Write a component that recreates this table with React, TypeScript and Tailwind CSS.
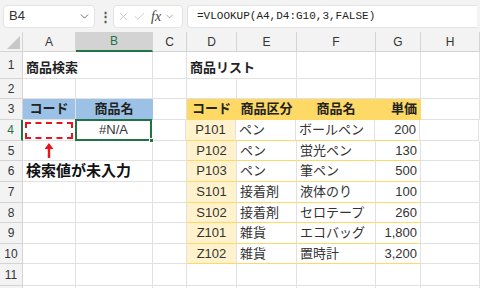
import { ChevronDown, X, Check } from "lucide-react";

const jp = { fontFamily: '"Liberation Sans", "Noto Sans CJK JP", sans-serif' };

const widths = ["w-[53px]", "w-[77px]", "w-[34px]", "w-[50px]", "w-[60px]", "w-[79px]", "w-[45px]", "w-[59px]"];
const letters = ["A", "B", "C", "D", "E", "F", "G", "H"];

const items = [
  ["P101", "ペン", "ボールペン", "200"],
  ["P102", "ペン", "蛍光ペン", "130"],
  ["P103", "ペン", "筆ペン", "500"],
  ["S101", "接着剤", "液体のり", "100"],
  ["S102", "接着剤", "セロテープ", "260"],
  ["Z101", "雑貨", "エコバッグ", "1,800"],
  ["Z102", "雑貨", "置時計", "3,200"],
];

const RowHead = ({ n, active }: { n?: number; active?: boolean }) => (
  <div
    className={`w-[23px] shrink-0 flex items-center justify-center bg-[#f3f3f3] border-r border-b border-[#d4d4d4] text-[12px] ${
      active ? "text-[#217346] border-r-[#217346] border-r-2" : "text-[#333]"
    }`}
  >
    {n}
  </div>
);

const Cell = ({ w, className = "", children }: { w: string; className?: string; children?: React.ReactNode }) => (
  <div className={`${w} shrink-0 flex items-center border-r border-b border-[#e1e1e1] ${className}`}>{children}</div>
);

const Blank = ({ from }: { from: number }) => (
  <>
    {widths.slice(from).map((w, i) => (
      <Cell key={i} w={w} />
    ))}
  </>
);

export default function App() {
  return (
    <div className="w-[480px] h-[288px] overflow-hidden bg-white text-[13px] text-[#333]" style={jp}>
      {/* formula bar */}
      <div className="h-[32px] bg-[#f3f3f3] flex items-center gap-[4px] px-[3px]">
        <div className="w-[92px] h-[23px] bg-white rounded-[4px] border border-[#e3e3e3] flex items-center justify-between pl-[5px] pr-[3px] text-[13px] text-[#333]">
          <span>B4</span>
          <ChevronDown size={13} strokeWidth={1.6} className="text-[#555]" />
        </div>
        <div className="w-[10px] text-center text-[#555] text-[13px] leading-none font-bold">⋮</div>
        <div className="w-[70px] h-[23px] bg-white rounded-[4px] border border-[#e3e3e3] flex items-center gap-[3px] px-[3px] text-[#bbb]">
          <X size={13} strokeWidth={1.3} />
          <Check size={13} strokeWidth={1.3} />
          <span className="text-[#444] italic text-[14px] ml-[2px]" style={{ fontFamily: '"Liberation Serif", serif' }}>
            fx
          </span>
          <ChevronDown size={11} strokeWidth={1.5} className="text-[#888]" />
        </div>
        <div
          className="flex-1 h-[23px] bg-white rounded-l-[4px] border border-r-0 border-[#e3e3e3] flex items-center pl-[9px] text-[11px] text-[#222]"
          style={{ fontFamily: '"Liberation Mono", monospace' }}
        >
          =VLOOKUP(A4,D4:G10,3,FALSE)
        </div>
      </div>

      {/* column headers */}
      <div className="flex h-[20px]">
        <div className="w-[23px] shrink-0 bg-[#f3f3f3] border-r border-b border-[#d4d4d4] relative">
          <div className="absolute right-[2px] bottom-[2px] w-0 h-0 border-l-[13px] border-l-transparent border-b-[13px] border-b-[#c8c8c8]" />
        </div>
        {widths.map((w, i) => (
          <div
            key={i}
            className={`${w} shrink-0 flex items-center justify-center text-[12px] border-r border-[#d4d4d4] ${
              i === 1
                ? "bg-[#d3d3d3] text-[#217346] border-b-2 border-b-[#217346]"
                : "bg-[#f3f3f3] text-[#333] border-b"
            }`}
          >
            {letters[i]}
          </div>
        ))}
      </div>

      {/* row 1 */}
      <div className="flex h-[27px]">
        <RowHead n={1} />
        <Cell w={widths[0]} className="border-r-0 font-bold pl-[3px] pt-[5px] text-[#222] whitespace-nowrap overflow-visible">
          商品検索
        </Cell>
        <Cell w={widths[1]} />
        <Cell w={widths[2]} />
        <Cell w={widths[3]} className="border-r-0 font-bold pl-[3px] pt-[5px] text-[#222] whitespace-nowrap overflow-visible">
          商品リスト
        </Cell>
        <Blank from={4} />
      </div>

      {/* row 2 */}
      <div className="flex h-[20px]">
        <RowHead n={2} />
        <Blank from={0} />
      </div>

      {/* row 3 */}
      <div className="flex h-[21px] text-[#222]">
        <RowHead n={3} />
        <Cell w={widths[0]} className="bg-[#9bc2e6] border-[#9bc2e6] justify-center font-bold">コード</Cell>
        <Cell w={widths[1]} className="bg-[#9bc2e6] border-r-[#9bc2e6] border-b-[#9bc2e6] justify-center font-bold">商品名</Cell>
        <Cell w={widths[2]} />
        <Cell w={widths[3]} className="bg-[#ffd966] border-[#ffd966] justify-center font-bold">コード</Cell>
        <Cell w={widths[4]} className="bg-[#ffd966] border-[#ffd966] justify-center font-bold">商品区分</Cell>
        <Cell w={widths[5]} className="bg-[#ffd966] border-[#ffd966] justify-center font-bold">商品名</Cell>
        <Cell w={widths[6]} className="bg-[#ffd966] border-[#ffd966] justify-end pr-[3px] font-bold">単価</Cell>
        <Cell w={widths[7]} />
      </div>

      {/* data rows 4-10 */}
      {items.map((it, r) => {
        const n = r + 4;
        const h = ["h-[21px]", "h-[20px]", "h-[21px]", "h-[21px]", "h-[20px]", "h-[21px]", "h-[20px]"][r];
        return (
          <div key={n} className={`flex ${h}`}>
            <RowHead n={n} active={n === 4} />
            {n === 4 ? (
              <>
                <Cell w={widths[0]} className="justify-center">
                  <div className="w-[48px] h-[17px] border-2 border-dashed border-[#e8141b]" />
                </Cell>
                <div className="w-[77px] shrink-0 relative flex items-center justify-center border-2 border-[#217346] -ml-[1px] -mt-[1px] h-[22px]">
                  #N/A
                  <div className="absolute -right-[4px] -bottom-[4px] w-[5px] h-[5px] bg-[#217346] border border-white" />
                </div>
              </>
            ) : n === 5 ? (
              <>
                <Cell w={widths[0]} className="justify-center">
                  <svg width="10" height="15" viewBox="0 0 10 15">
                    <path d="M5 0 L9.5 6 L6.2 6 L6.2 15 L3.8 15 L3.8 6 L0.5 6 Z" fill="#e8141b" />
                  </svg>
                </Cell>
                <Cell w={widths[1]} />
              </>
            ) : n === 6 ? (
              <>
                <Cell w={widths[0]} className="border-r-0 whitespace-nowrap overflow-visible pl-[3px] text-[15px] font-bold text-[#111] z-10">
                  検索値が未入力
                </Cell>
                <Cell w={widths[1]} />
              </>
            ) : (
              <>
                <Cell w={widths[0]} />
                <Cell w={widths[1]} />
              </>
            )}
            <Cell w={widths[2]} />
            <Cell w={widths[3]} className="bg-[#fff2cc] border-b-[#ffd966] justify-center">{it[0]}</Cell>
            <Cell w={widths[4]} className="border-b-[#ffd966] pl-[3px]">{it[1]}</Cell>
            <Cell w={widths[5]} className="border-b-[#ffd966] pl-[3px]">{it[2]}</Cell>
            <Cell w={widths[6]} className="border-b-[#ffd966] justify-end pr-[3px]">{it[3]}</Cell>
            <Cell w={widths[7]} />
          </div>
        );
      })}

      {/* row 11-12 */}
      <div className="flex h-[22px]">
        <RowHead n={11} />
        <Blank from={0} />
      </div>
      <div className="flex h-[21px]">
        <RowHead />
        <Blank from={0} />
      </div>
    </div>
  );
}
